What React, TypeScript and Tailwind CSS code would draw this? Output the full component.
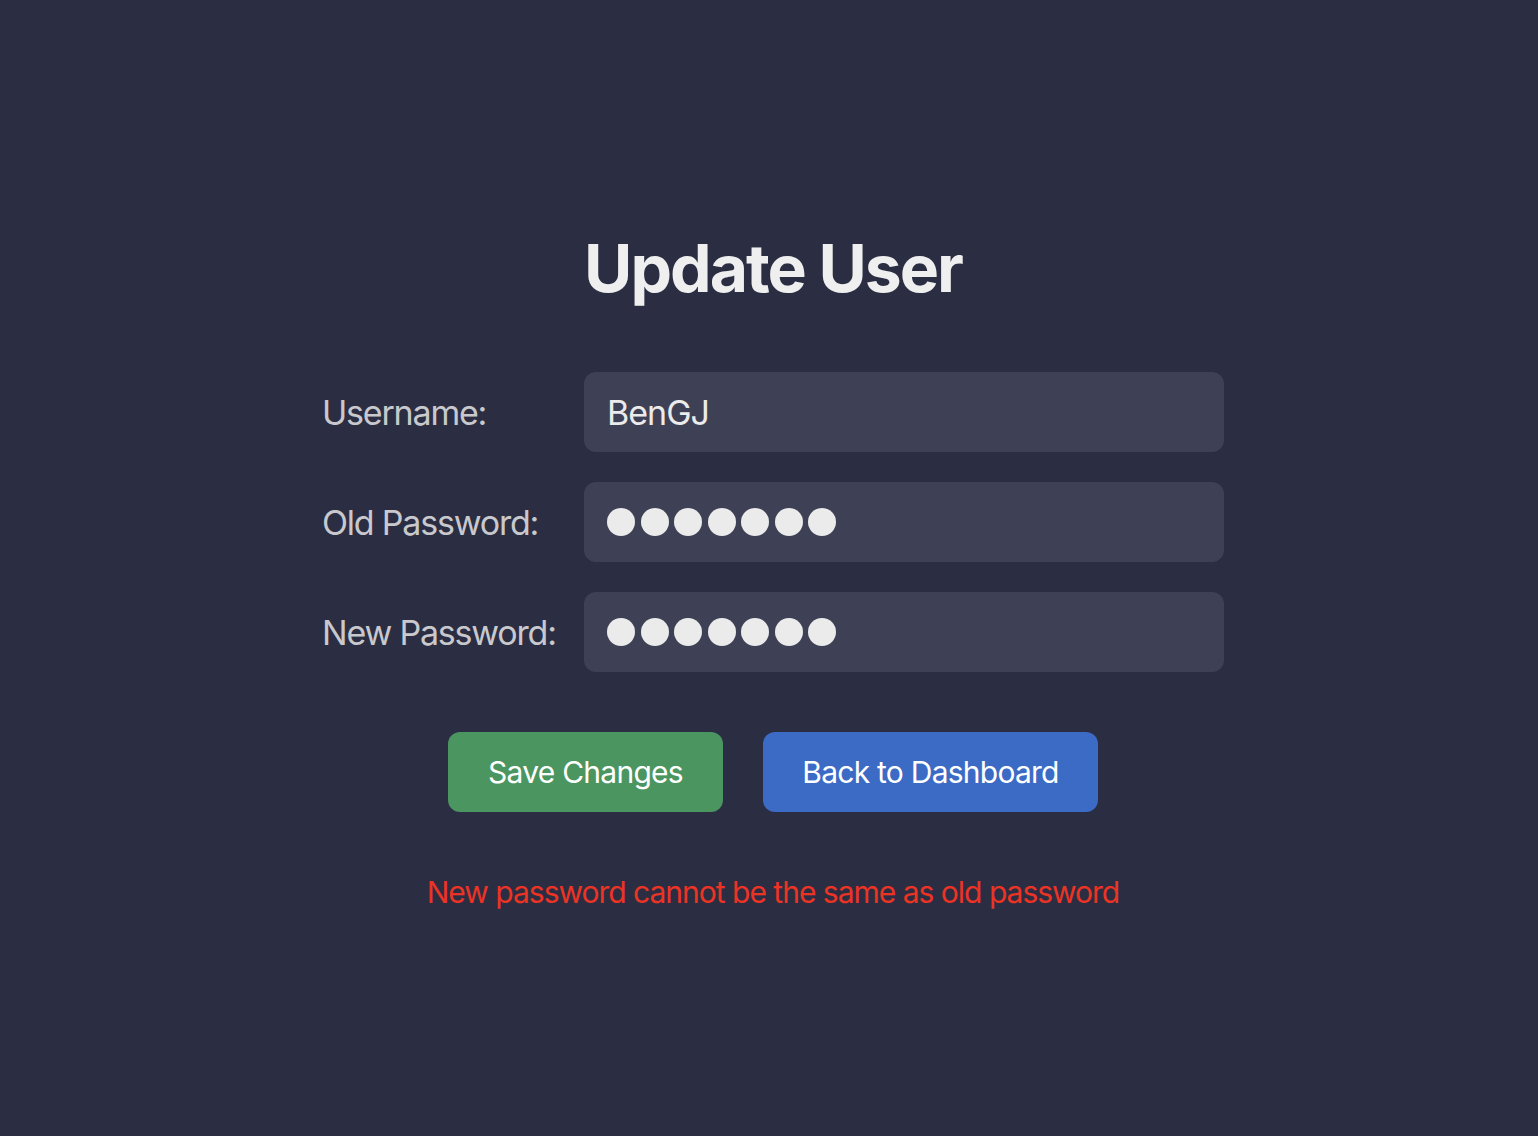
const Dots = () => (
  <div className="flex items-center gap-[5.5px]">
    {[0, 1, 2, 3, 4, 5, 6].map((i) => (
      <span key={i} className="block w-[28px] h-[28px] rounded-full bg-[#ebebeb]" />
    ))}
  </div>
);

const App = () => {
  const labelStyle = `w-[262px] shrink-0 text-[34px] text-[#c9c9cd] tracking-[-1.2px]`;
  const inputStyle = `flex items-center w-[640px] h-[80px] rounded-[12px] bg-[#3e4155] px-[23px]`;
  const btnStyle = `h-[80px] rounded-[12px] text-[30px] text-white tracking-[-0.75px]`;

  return (
    <div
      className="min-h-screen w-full bg-[#2b2e42] flex flex-col items-center pl-2 pt-[228px]"
      style={{ fontFamily: "Inter, 'Noto Sans', sans-serif" }}
    >
      <h1 className="text-[66px] leading-[80px] font-bold text-[#efefef] tracking-[-2px]">
        Update User
      </h1>

      <div className="flex flex-col gap-[30px] mt-[64px]">
        <div className="flex items-center">
          <div className={labelStyle}>Username:</div>
          <div className={inputStyle}>
            <span className="text-[34px] text-[#ebebeb] tracking-[-1px]">BenGJ</span>
          </div>
        </div>
        <div className="flex items-center">
          <div className={labelStyle}>Old Password:</div>
          <div className={inputStyle}>
            <Dots />
          </div>
        </div>
        <div className="flex items-center">
          <div className={labelStyle}>New Password:</div>
          <div className={inputStyle}>
            <Dots />
          </div>
        </div>
      </div>

      <div className="flex gap-[40px] mt-[60px]">
        <button className={btnStyle + ` w-[275px] bg-[#4b9560]`}>Save Changes</button>
        <button className={btnStyle + ` w-[335px] bg-[#3b6bc5]`}>Back to Dashboard</button>
      </div>

      <p className="mt-[58px] text-[30px] text-[#ec3324] tracking-[-1px]">
        New password cannot be the same as old password
      </p>
    </div>
  );
};

export default App;
